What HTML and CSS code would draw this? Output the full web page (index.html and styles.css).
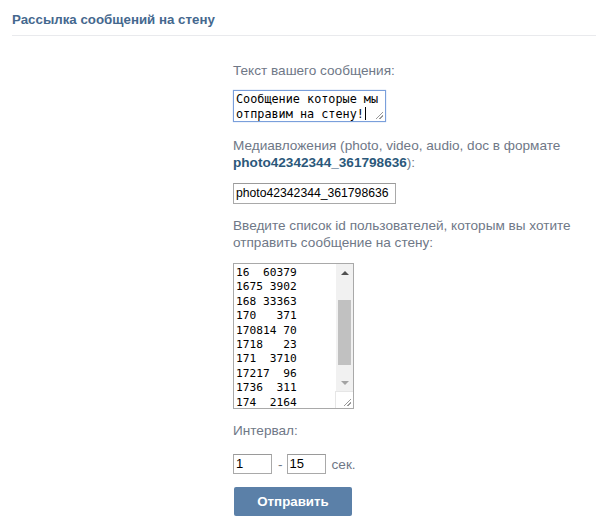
FILE: index.html
```html
<!DOCTYPE html>
<html lang="ru">
<head>
<meta charset="utf-8">
<title>Рассылка сообщений на стену</title>
<link rel="stylesheet" href="styles.css">
</head>
<body>
<div class="header"><h1 class="title">Рассылка сообщений на стену</h1></div>
<form class="form">
  <div class="group g-msg">
    <div class="label">Текст вашего сообщения:</div>
    <div class="ta-msg">Сообщение которые мы<br>отправим на стену!<span class="caret"></span><span class="grip"></span></div>
  </div>
  <div class="group g-media">
    <div class="label">Медиавложения (photo, video, audio, doc в формате <b class="strong">photo42342344_361798636</b>):</div>
    <div class="input wide">photo42342344_361798636</div>
  </div>
  <div class="group g-ids">
    <div class="label">Введите список id пользователей, которым вы хотите отправить сообщение на стену:</div>
    <div class="ta-list">
      <div class="ids">16  60379<br>1675 3902<br>168 33363<br>170   371<br>170814 70<br>1718   23<br>171  3710<br>17217  96<br>1736  311<br>174  2164</div>
      <div class="scroll">
        <div class="arrow up"></div>
        <div class="track"><div class="thumb"></div></div>
        <div class="arrow down"></div>
        <div class="corner"><span class="grip"></span></div>
      </div>
    </div>
  </div>
  <div class="group g-interval">
    <div class="label">Интервал:</div>
    <div class="interval">
      <div class="input small">1</div>
      <span class="dash">-</span>
      <div class="input small">15</div>
      <span class="unit">сек.</span>
    </div>
  </div>
  <button type="button" class="btn">Отправить</button>
</form>
</body>
</html>
```
FILE: styles.css
```css
html, body { margin: 0; padding: 0; background: #fff; }
body { font-family: "Liberation Sans", Arial, sans-serif; font-size: 13.6px; color: #333; }
.header { margin: 0 12px; padding: 12px 0 7px; border-bottom: 1px solid #e9eaed; }
.title { margin: 0; font-size: 13.3px; line-height: 16px; font-weight: bold; color: #45688e; }
.form { margin: 26px 0 0 233px; width: 350px; }
.group { margin-bottom: 13px; }
.label { color: #6f7887; line-height: 17px; margin-bottom: 12px; }
.g-msg { margin-bottom: 15px; }
.g-msg .label { margin-bottom: 11px; }
.g-interval .label { margin-bottom: 15px; }
.strong { color: #2b587a; }
.ta-msg { position: relative; box-sizing: border-box; width: 153px; height: 32px; border: 1px solid #7a9fdb; box-shadow: 0 0 1px #9ab8e8; padding: 1px 2px; font-family: "DejaVu Sans Mono", monospace; font-size: 11.8px; line-height: 15px; color: #000; white-space: nowrap; }
.caret { display: inline-block; width: 1px; height: 13px; background: #000; vertical-align: -2px; margin-left: 1px; }
.grip { position: absolute; right: 2px; bottom: 2px; width: 7px; height: 7px; background: linear-gradient(135deg, transparent 45%, #999 45%, #999 55%, transparent 55%, transparent 70%, #999 70%, #999 80%, transparent 80%); }
.input { box-sizing: border-box; height: 21px; border: 1px solid #a9a9a9; border-top-color: #9a9a9a; padding: 0 2px; line-height: 19px; color: #000; font-size: 12.2px; }
.wide { width: 163px; }
.ta-list { box-sizing: border-box; width: 121px; height: 146px; border: 1px solid #a9a9a9; display: flex; }
.ids { flex: 1; padding: 2px 2px; font-family: "DejaVu Sans Mono", monospace; font-size: 11.2px; line-height: 14.4px; color: #000; white-space: pre; overflow: hidden; }
.scroll { width: 17px; display: flex; flex-direction: column; background: #f1f1f1; }
.arrow { height: 17px; display: flex; align-items: center; justify-content: center; }
.arrow::before { content: ""; border-left: 4px solid transparent; border-right: 4px solid transparent; }
.up::before { border-bottom: 4px solid #505050; }
.down::before { border-top: 4px solid #a3a3a3; }
.track { flex: 1; padding: 19px 2px 9px; }
.thumb { height: 100%; background: #c1c1c1; }
.corner { position: relative; height: 16px; background: #fff; border-top: 1px solid #e6e6e6; border-left: 1px solid #e6e6e6; margin-left: -1px; }
.interval { display: flex; align-items: center; }
.small { width: 39px; height: 20px; line-height: 18px; font-size: 13px; }
.dash { margin: 0 4px 0 6px; color: #6f7887; }
.unit { margin-left: 6px; color: #6f7887; }
.btn { margin: 0 0 0 1px; width: 118px; height: 29px; border: 0; border-radius: 2px; background: #5b80a8; color: #fff; font-family: "Liberation Sans", Arial, sans-serif; font-size: 13.3px; font-weight: bold; padding: 0; }
```
